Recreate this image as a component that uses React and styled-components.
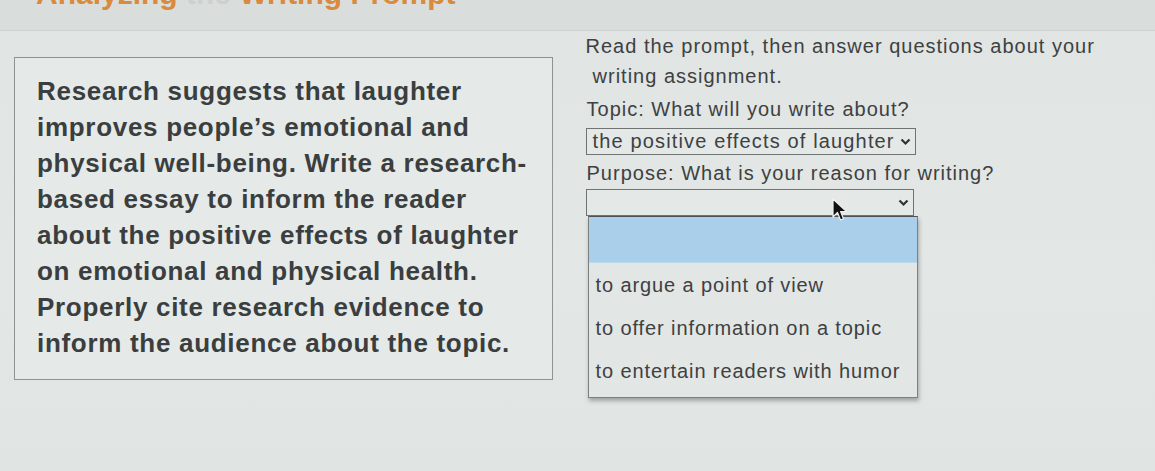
import React from "react";
import styled, { createGlobalStyle } from "styled-components";

const GlobalStyle = createGlobalStyle`
  html, body {
    margin: 0;
    padding: 0;
    background: #e1e5e3;
  }
  body {
    font-family: "Liberation Sans", Arial, sans-serif;
    color: #3b3f40;
  }
`;

const Page = styled.div`
  width: 1155px;
  height: 471px;
  overflow: hidden;
  background: linear-gradient(180deg, #e0e4e2 0%, #e3e7e5 60%, #e0e5e3 100%);
`;

const Header = styled.div`
  height: 30px;
  overflow: hidden;
  background: #d9dedc;
  border-bottom: 1px solid #cdd2d1;
`;

const Title = styled.h1`
  margin: -21px 0 0 36px;
  font-size: 30px;
  line-height: 30px;
  font-weight: bold;
  color: #d98a3c;
  white-space: nowrap;
  span {
    color: #cdd0cd;
  }
`;

const Main = styled.div`
  display: flex;
  align-items: flex-start;
  gap: 33px;
  padding-left: 14px;
`;

const PromptBox = styled.div`
  box-sizing: border-box;
  width: 539px;
  height: 323px;
  margin-top: 26px;
  padding: 15px 0 0 22px;
  border: 1px solid #8e9392;
  background: #e5e9e7;
  font-size: 26px;
  line-height: 36px;
  letter-spacing: 0.7px;
  font-weight: bold;
  color: #3a3e3f;
  white-space: nowrap;
`;

const Questions = styled.div`
  width: 570px;
  display: flex;
  flex-direction: column;
  font-size: 20px;
  line-height: 30px;
  letter-spacing: 1px;
  color: #3d4142;
  white-space: nowrap;
`;

const Intro = styled.p`
  margin: 0;
  span {
    display: block;
    padding-left: 7px;
  }
`;

const Label = styled.div`
  margin-top: ${(p) => p.$top || 0}px;
  padding-left: 1px;
`;

const Select = styled.div`
  position: relative;
  box-sizing: border-box;
  width: ${(p) => p.$width}px;
  height: 27px;
  margin-top: ${(p) => p.$top || 0}px;
  padding: 0 16px 0 6px;
  display: flex;
  align-items: center;
  border: 1px solid #6f7473;
  background: #e4e8e6;
  line-height: 25px;
  letter-spacing: 1.15px;
  svg.chev {
    position: absolute;
    right: 4px;
    top: 9px;
  }
`;

const List = styled.div`
  box-sizing: border-box;
  width: 330px;
  margin-left: 2px;
  padding-bottom: 5px;
  border: 1px solid #7c8180;
  border-top-color: #50504f;
  background: #e2e6e4;
  box-shadow: 1px 3px 4px rgba(40, 45, 45, 0.35);
`;

const Option = styled.div`
  height: ${(p) => (p.$blank ? 45 : 43)}px;
  display: flex;
  align-items: center;
  padding-left: 7px;
  letter-spacing: 0.9px;
  background: ${(p) => (p.$active ? "#a9cfea" : "transparent")};
  border-bottom: ${(p) => (p.$active ? "1px solid #bcd9ee" : "none")};
`;

const Cursor = styled.svg`
  position: absolute;
  left: 245px;
  top: 8px;
`;

function Chevron() {
  return (
    <svg className="chev" width="11" height="8" viewBox="0 0 11 8">
      <polyline
        points="1.5,1.5 5.5,5.5 9.5,1.5"
        fill="none"
        stroke="#2f3333"
        strokeWidth="2.2"
      />
    </svg>
  );
}

export default function App() {
  return (
    <>
      <GlobalStyle />
      <Page>
        <Header>
          <Title>
            Analyzing <span>the</span> Writing Prompt
          </Title>
        </Header>
        <Main>
          <PromptBox>
            Research suggests that laughter
            <br />
            improves people’s emotional and
            <br />
            physical well-being. Write a research-
            <br />
            based essay to inform the reader
            <br />
            about the positive effects of laughter
            <br />
            on emotional and physical health.
            <br />
            Properly cite research evidence to
            <br />
            inform the audience about the topic.
          </PromptBox>
          <Questions>
            <Intro>
              Read the prompt, then answer questions about your
              <span>writing assignment.</span>
            </Intro>
            <Label $top={3}>Topic: What will you write about?</Label>
            <Select $width={330} $top={4}>
              the positive effects of laughter
              <Chevron />
            </Select>
            <Label $top={3}>Purpose: What is your reason for writing?</Label>
            <Select $width={328} $top={1}>
              <Chevron />
              <Cursor width="16" height="24" viewBox="0 0 16 24">
                <path
                  d="M1 1 L1 19 L5.5 14.5 L8.5 22 L11.5 20.8 L8.6 13.6 L14.5 13.6 Z"
                  fill="#111"
                  stroke="#f2f2f2"
                  strokeWidth="1.2"
                  strokeLinejoin="round"
                />
              </Cursor>
            </Select>
            <List>
              <Option $active $blank />
              <Option>to argue a point of view</Option>
              <Option>to offer information on a topic</Option>
              <Option>to entertain readers with humor</Option>
            </List>
          </Questions>
        </Main>
      </Page>
    </>
  );
}
